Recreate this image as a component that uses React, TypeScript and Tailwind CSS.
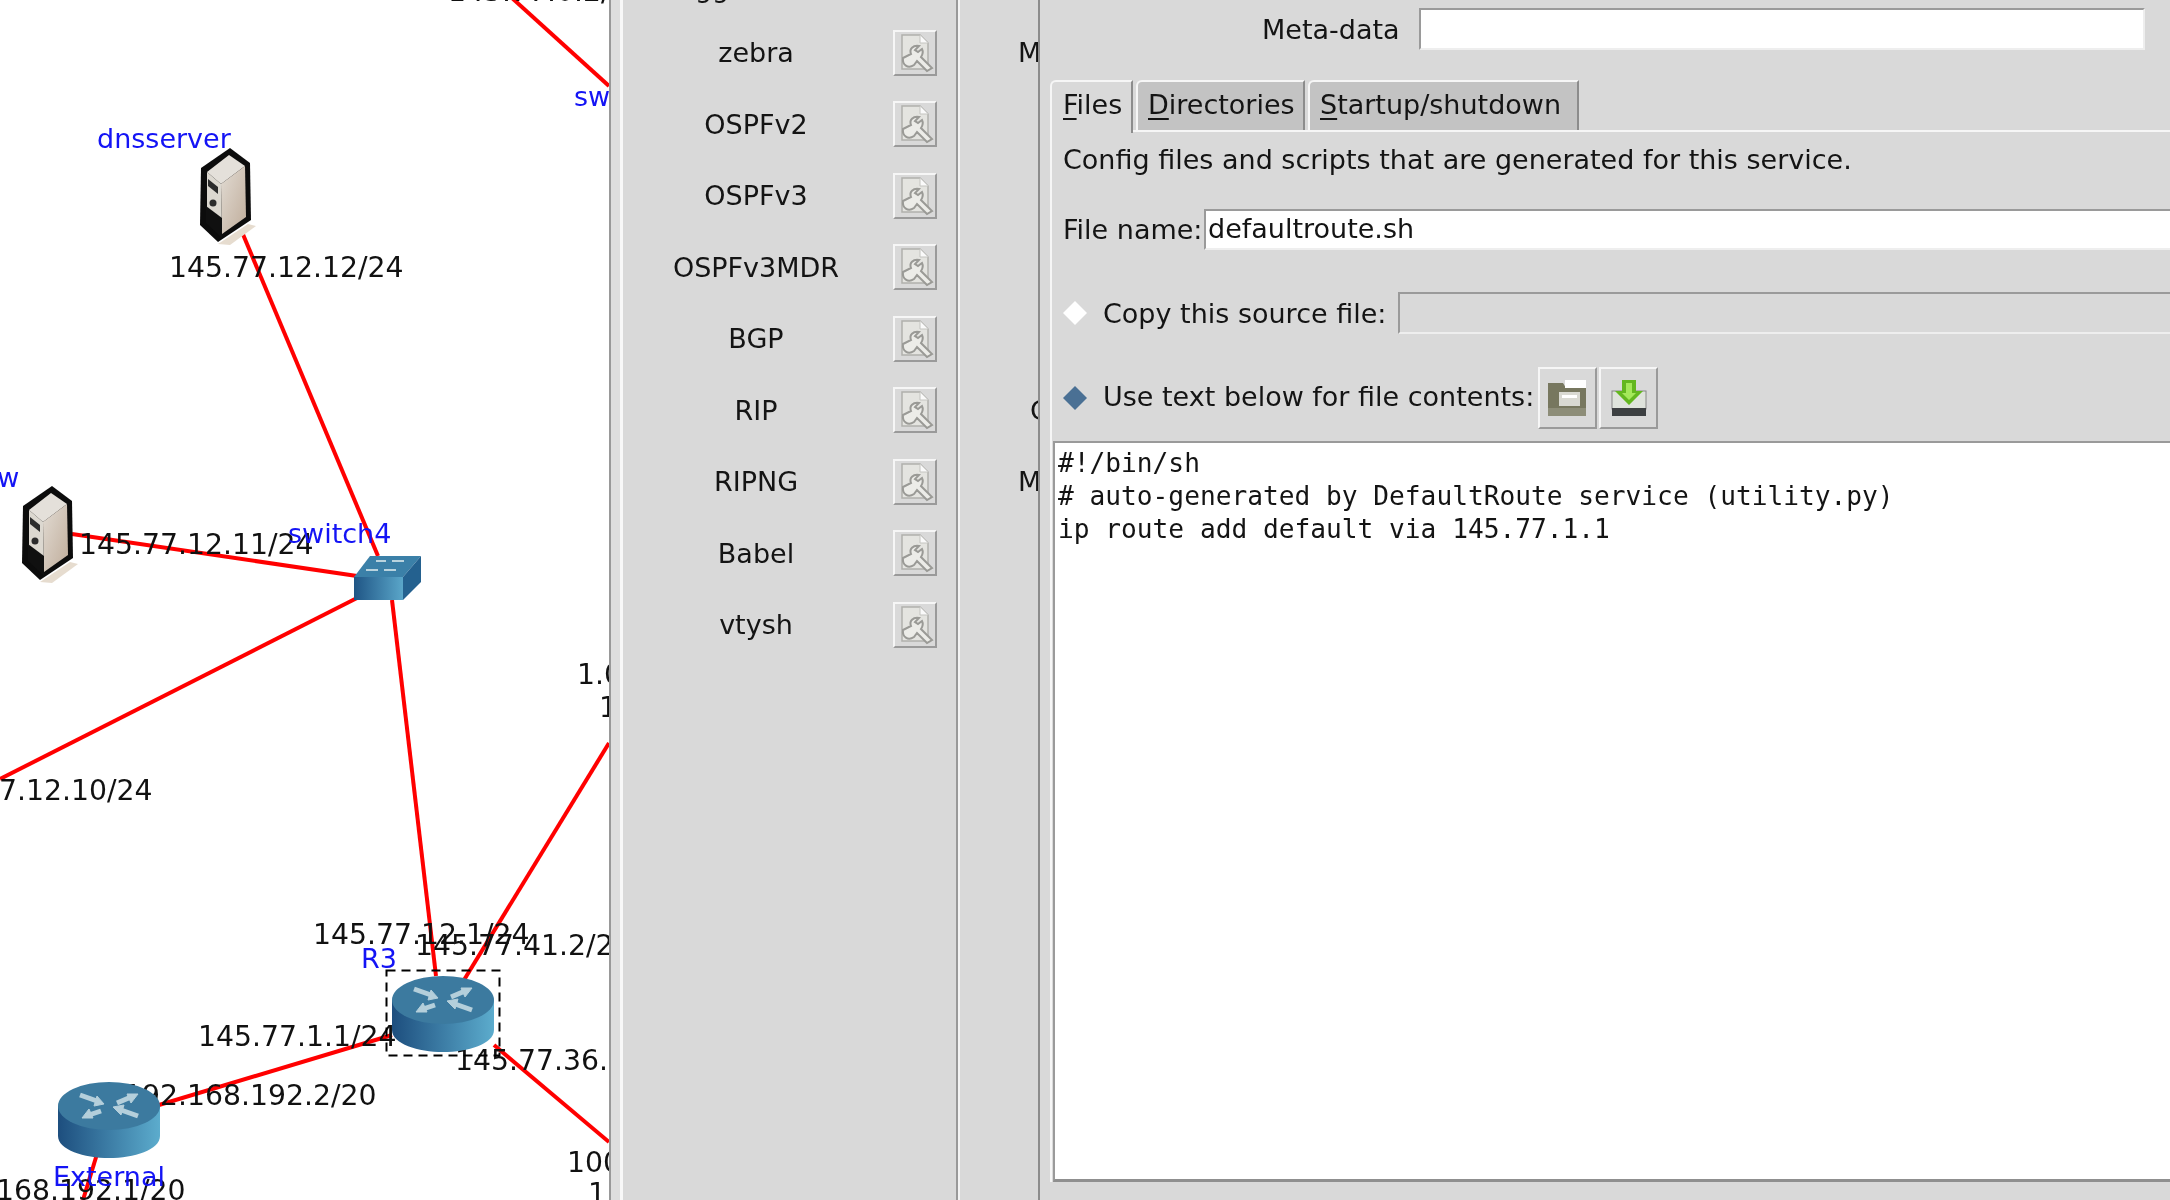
const services = ["zebra", "OSPFv2", "OSPFv3", "OSPFv3MDR", "BGP", "RIP", "RIPNG", "Babel", "vtysh"];
const hiddenLabels = ["M", "", "", "", "", "C", "M", "", ""];

const links = [
  [512, -2, 609, 86],
  [242, 232, 378, 556],
  [72, 534, 357, 576],
  [357, 598, 0, 779],
  [392, 600, 436, 976],
  [464, 980, 609, 743],
  [392, 1035, 159, 1105],
  [494, 1045, 609, 1142],
  [97, 1154, 83, 1200],
];

const addresses: [string, number, number][] = [
  ["145.77.0.2/24", 448, 1],
  ["145.77.12.12/24", 169, 277],
  ["145.77.12.11/24", 79, 554],
  ["145.77.12.10/24", -82, 800],
  ["1.0.0.1", 577, 684],
  ["1.0.0.2", 599, 717],
  ["145.77.12.1/24", 313, 944],
  ["145.77.41.2/24", 415, 955],
  ["145.77.1.1/24", 198, 1046],
  ["145.77.36.1/24", 455, 1070],
  ["192.168.192.2/20", 124, 1105],
  ["100.0.0.1", 567, 1172],
  ["1.0.0.3", 588, 1203],
  ["192.168.192.1/20", -67, 1200],
];

const names: [string, number, number][] = [
  ["switch", 574, 106],
  ["dnsserver", 97, 148],
  ["gw", -20, 487],
  ["switch4", 288, 543],
  ["R3", 361, 968],
  ["External", 53, 1186],
];

function Server({ x, y }: { x: number; y: number }) {
  return (
    <g transform={`translate(${x} ${y})`}>
      <polygon points="48,76 56,78 30,97 18,96" fill="#e6dccf" />
      <polygon points="30,0 50,15 51,72 18,94 0,77 1,20" fill="#0c0c0c" />
      <polygon points="29,7 45,18 21,36 7,24" fill="#e4e0da" />
      <polygon points="21,36 45,18 46,69 22,86" fill="url(#beige)" />
      <polygon points="7,24 21,36 22,86 7,73" fill="#dcd8d0" />
      <polygon points="6,58 22,70 22,90 6,75" fill="#101010" />
      <polygon points="8,31 18,39 18,46 8,38" fill="#2c2c2c" />
      <circle cx="13" cy="55" r="3.5" fill="#2c2c2c" />
    </g>
  );
}

function Router({ x, y }: { x: number; y: number }) {
  return (
    <g transform={`translate(${x} ${y})`}>
      <path d="M-51 0 V30 C-51 44 -25 52 0 52 C25 52 51 44 51 30 V0 Z" fill="url(#routerSide)" />
      <ellipse cx="0" cy="0" rx="51" ry="24" fill="#3c7a9f" />
      <g stroke="#b4cfdb" strokeWidth="5" fill="#b4cfdb">
        <line x1="-29" y1="-11" x2="-12" y2="-5" />
        <polygon points="-5,-2 -15,0 -12,-10" strokeWidth="1" />
        <line x1="-8" y1="5" x2="-20" y2="9" />
        <polygon points="-27,12 -20,3 -16,12" strokeWidth="1" />
        <line x1="8" y1="-3" x2="22" y2="-9" />
        <polygon points="29,-12 22,-3 18,-12" strokeWidth="1" />
        <line x1="12" y1="4" x2="29" y2="10" />
        <polygon points="4,1 15,-1 12,9" strokeWidth="1" />
      </g>
    </g>
  );
}

function Topology() {
  return (
    <svg width="609" height="1200" viewBox="0 0 609 1200" className="block">
      <defs>
        <linearGradient id="routerSide" x1="0" x2="1" y1="0" y2="0">
          <stop offset="0" stopColor="#1d4e7e" />
          <stop offset="1" stopColor="#5caccd" />
        </linearGradient>
        <linearGradient id="switchFront" x1="0" x2="1" y1="0" y2="0">
          <stop offset="0" stopColor="#1f5585" />
          <stop offset="1" stopColor="#5aa6c9" />
        </linearGradient>
        <linearGradient id="beige" x1="0" x2="1" y1="0" y2="1">
          <stop offset="0" stopColor="#e2dcd4" />
          <stop offset="1" stopColor="#c0ad9b" />
        </linearGradient>
      </defs>

      {links.map(([x1, y1, x2, y2]) => (
        <line key={`${x1}-${y1}`} x1={x1} y1={y1} x2={x2} y2={y2} stroke="#ff0000" strokeWidth="4" />
      ))}

      <g fontFamily="'DejaVu Sans', sans-serif">
        {addresses.map(([text, x, y]) => (
          <text key={text} x={x} y={y} fontSize="28.3" fill="#111111">
            {text}
          </text>
        ))}
        {names.map(([text, x, y]) => (
          <text key={text} x={x} y={y} fontSize="27" fill="#1414f5">
            {text}
          </text>
        ))}
      </g>

      <Server x={200} y={148} />
      <Server x={22} y={486} />

      <rect x="386.5" y="970.5" width="113" height="85" fill="none" stroke="#000" strokeWidth="2" strokeDasharray="9 6" />
      <Router x={443} y={1000} />
      <Router x={109} y={1106} />

      <polygon points="354,577 403,577 403,600 354,600" fill="url(#switchFront)" />
      <polygon points="370,556 421,556 403,577 354,577" fill="#3b80a8" />
      <polygon points="403,577 421,556 421,582 403,600" fill="#24618f" />
      <g stroke="#b9d3de" strokeWidth="2">
        <line x1="376" y1="561" x2="386" y2="561" />
        <line x1="392" y1="561" x2="404" y2="561" />
        <line x1="366" y1="570" x2="378" y2="570" />
        <line x1="384" y1="570" x2="396" y2="570" />
      </g>
    </svg>
  );
}

function WrenchIcon() {
  return (
    <svg width="40" height="42" viewBox="0 0 40 42">
      <path d="M7 3 H25 L33 11 V37 H7 Z" fill="#e4e4e0" stroke="#b0b0ac" strokeWidth="1.5" />
      <path d="M25 3 V11 H33" fill="#fafafa" stroke="#c4c4c0" />
      <path
        d="M24 14 C18 13 14 17 16 22 L8 26 C7 33 13 37 19 33 L22 29 L32 39 L37 36 L26 25 C28 22 28 19 27 17 L23 20 L20 18 Z"
        fill="#ecece8"
        stroke="#9a9a96"
        strokeWidth="2"
      />
    </svg>
  );
}

function FolderIcon() {
  return (
    <svg width="42" height="40" viewBox="0 0 42 40">
      <path d="M1 5 H16 L19 10 H39 V38 H1 Z" fill="#77775f" />
      <rect x="18" y="2" width="21" height="8" fill="#ffffff" />
      <rect x="12" y="14" width="21" height="14" fill="#d9d9d2" />
      <rect x="15" y="17" width="15" height="3" fill="#ffffff" />
      <rect x="1" y="30" width="38" height="8" fill="#8d8d78" />
    </svg>
  );
}

function SaveIcon() {
  return (
    <svg width="40" height="40" viewBox="0 0 40 40">
      <rect x="3" y="13" width="34" height="18" fill="#dfe3dc" stroke="#888" />
      <rect x="3" y="30" width="34" height="8" fill="#3d4042" />
      <polygon points="13,2 27,2 27,13 34,13 20,27 6,13 13,13" fill="#63b71f" />
      <polygon points="17,5 23,5 23,15 27,15 20,22 13,15 17,15" fill="#a4e85a" />
    </svg>
  );
}

function Diamond({ color }: { color: string }) {
  return (
    <svg width="26" height="26" viewBox="0 0 26 26" className="shrink-0">
      <polygon points="13,1 25,13 13,25 1,13" fill={color} />
    </svg>
  );
}

export default function App() {
  return (
    <div className="flex h-[1200px] w-[2170px] overflow-hidden bg-[#d9d9d9] font-['DejaVu_Sans',sans-serif] text-[27px] leading-[31px] text-[#141414] blur-[0.7px]">
      <div className="h-full w-[609px] shrink-0 overflow-hidden bg-white">
        <Topology />
      </div>
      <div className="h-full w-[2px] shrink-0 bg-[#999999]" />
      <div className="h-full w-[9px] shrink-0 bg-[#dedede]" />
      <div className="h-full w-[3px] shrink-0 bg-[#f8f8f8]" />

      <div className="h-full w-[335px] shrink-0 overflow-hidden border-r-2 border-[#999999]">
        <div className="mt-[-28px] h-[31px] pl-[17px]">Quagga</div>
        <div className="mt-[14px]">
          {services.map((name) => (
            <div key={name} className="flex h-[71.5px] items-center">
              <div className="w-[266px] text-center">{name}</div>
              <button className="ml-[4px] flex h-[46px] w-[44px] items-center justify-center border-2 border-t-[#f6f6f6] border-r-[#9a9a9a] border-b-[#9a9a9a] border-l-[#f6f6f6]">
                <WrenchIcon />
              </button>
            </div>
          ))}
        </div>
      </div>

      <div className="h-full w-[82px] shrink-0 overflow-hidden border-r-2 border-l-2 border-r-[#8c8c8c] border-l-[#f4f4f4]">
        <div className="pt-[17px]">
          {hiddenLabels.map((label, i) => (
            <div key={i} className={label === "C" ? "h-[71.5px] pl-[70px] pt-[20px]" : "h-[71.5px] pl-[58px] pt-[20px]"}>
              {label}
            </div>
          ))}
        </div>
      </div>

      <div className="h-full min-w-0 flex-1 overflow-hidden">
        <div className="mt-[8px] flex h-[42px] items-center pl-[222px]">
          <div className="w-[157px]">Meta-data</div>
          <div className="h-[42px] w-[726px] border-2 border-t-[#9a9a9a] border-r-[#eeeeee] border-b-[#eeeeee] border-l-[#9a9a9a] bg-white" />
        </div>

        <div className="mt-[30px] flex h-[50px] items-start gap-[3px] pl-[10px]">
          <div className="relative z-10 h-[53px] w-[83px] rounded-tl-md border-t-2 border-r-2 border-l-2 border-t-[#f6f6f6] border-r-[#8c8c8c] border-l-[#f6f6f6] bg-[#d9d9d9] pt-[7px] pl-[11px]">
            <span className="underline underline-offset-4">F</span>iles
          </div>
          <div className="h-[50px] w-[169px] rounded-tl-md border-t-2 border-r-2 border-l-2 border-t-[#f6f6f6] border-r-[#8c8c8c] border-l-[#f6f6f6] bg-[#c3c3c3] pt-[7px] pl-[10px]">
            <span className="underline underline-offset-4">D</span>irectories
          </div>
          <div className="h-[50px] w-[271px] rounded-tl-md border-t-2 border-r-2 border-l-2 border-t-[#f6f6f6] border-r-[#8c8c8c] border-l-[#f6f6f6] bg-[#c3c3c3] pt-[7px] pl-[10px]">
            <span className="underline underline-offset-4">S</span>tartup/shutdown
          </div>
        </div>

        <div className="ml-[10px] h-[1052px] w-[1200px] border-t-2 border-l-2 border-[#f6f6f6]">
          <div className="mt-[14px] ml-[11px] h-[28px] leading-[28px]">
            Config files and scripts that are generated for this service.
          </div>

          <div className="mt-[35px] ml-[11px] flex h-[41px] items-center">
            <div className="w-[141px]">File name:</div>
            <div className="h-[41px] w-[1000px] border-t-2 border-b-2 border-l-2 border-t-[#9a9a9a] border-b-[#eeeeee] border-l-[#9a9a9a] bg-white pl-[2px] leading-[35px]">
              defaultroute.sh
            </div>
          </div>

          <div className="mt-[42px] ml-[10px] flex h-[42px] items-center">
            <Diamond color="#ffffff" />
            <div className="ml-[15px] w-[310px]">Copy this source file:</div>
            <div className="ml-[1px] h-[42px] w-[900px] border-t-2 border-b-2 border-l-2 border-t-[#9a9a9a] border-b-[#eeeeee] border-l-[#9a9a9a]" />
          </div>

          <div className="mt-[33px] ml-[10px] flex h-[62px] items-center">
            <Diamond color="#4a7094" />
            <div className="mb-[4px] ml-[15px] w-[435px]">Use text below for file contents:</div>
            <button className="flex h-[62px] w-[59px] items-center justify-center border-2 border-t-[#f6f6f6] border-r-[#9a9a9a] border-b-[#9a9a9a] border-l-[#f6f6f6]">
              <FolderIcon />
            </button>
            <button className="ml-[2px] flex h-[62px] w-[59px] items-center justify-center border-2 border-t-[#f6f6f6] border-r-[#9a9a9a] border-b-[#9a9a9a] border-l-[#f6f6f6]">
              <SaveIcon />
            </button>
          </div>

          <div className="mt-[12px] ml-[1px] h-[741px] border-t-2 border-b-[3px] border-l-2 border-t-[#9a9a9a] border-b-[#8f8f8f] border-l-[#9a9a9a] bg-white pt-[4px] pl-[3px] font-['DejaVu_Sans_Mono',monospace] text-[26.2px] leading-[33px] whitespace-pre">
            <div>#!/bin/sh</div>
            <div># auto-generated by DefaultRoute service (utility.py)</div>
            <div>ip route add default via 145.77.1.1</div>
          </div>
        </div>
      </div>
    </div>
  );
}
